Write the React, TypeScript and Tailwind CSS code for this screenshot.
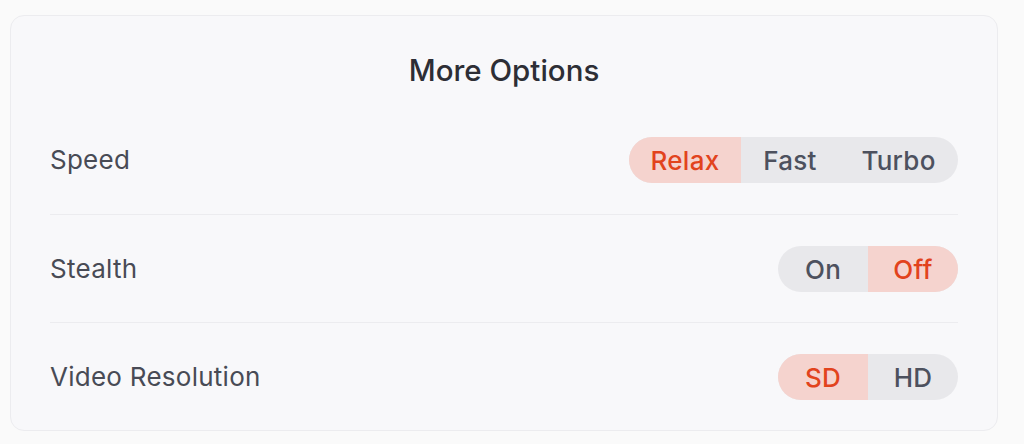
import React from "react";

type Opt = { label: string; w: string };

function Segmented({ options, active, onPick }: { options: Opt[]; active: number; onPick: (i: number) => void }) {
    return (
        <div className="flex h-[46px] overflow-hidden rounded-full bg-[#e8e8eb]">
            {options.map((o, i) => (
                <button
                    key={o.label}
                    onClick={() => onPick(i)}
                    className={`flex items-center justify-center text-[26px] font-medium tracking-[0.01em] ${o.w} ${
                        i === active ? "bg-[#f5d3ce] text-[#e2431d]" : "text-[#4d515e]"
                    }`}
                >
                    {o.label}
                </button>
            ))}
        </div>
    );
}

function Row({ label, children, divider, first }: { label: string; children: React.ReactNode; divider?: boolean; first?: boolean }) {
    return (
        <div
            className={`flex items-center justify-between pt-[31px] ${first ? "pb-[31px]" : "pb-[30px]"} ${
                divider ? "border-t border-[#ececef]" : ""
            }`}
        >
            <span className="text-[26px] leading-none tracking-[0.01em] text-[#484b55]">{label}</span>
            {children}
        </div>
    );
}

export default function App() {
    const [speed, setSpeed] = React.useState(0);
    const [stealth, setStealth] = React.useState(1);
    const [res, setRes] = React.useState(0);

    return (
        <div className="min-h-screen bg-[#fafafa] pl-[10px] pt-[15px] font-['Inter',sans-serif]">
            <div className="w-[988px] rounded-[14px] border border-[#ececef] bg-[#f8f8fa] px-[39px]">
                <h2 className="pt-[38px] pb-[20px] text-center text-[29.5px] leading-8 font-medium text-[#2d2e35]">More Options</h2>
                <Row label="Speed" first>
                    <Segmented
                        options={[
                            { label: "Relax", w: "w-[112px]" },
                            { label: "Fast", w: "w-[98px]" },
                            { label: "Turbo", w: "w-[119px]" },
                        ]}
                        active={speed}
                        onPick={setSpeed}
                    />
                </Row>
                <Row label="Stealth" divider>
                    <Segmented
                        options={[
                            { label: "On", w: "w-[90px]" },
                            { label: "Off", w: "w-[90px]" },
                        ]}
                        active={stealth}
                        onPick={setStealth}
                    />
                </Row>
                <Row label="Video Resolution" divider>
                    <Segmented
                        options={[
                            { label: "SD", w: "w-[90px]" },
                            { label: "HD", w: "w-[90px]" },
                        ]}
                        active={res}
                        onPick={setRes}
                    />
                </Row>
            </div>
        </div>
    );
}
